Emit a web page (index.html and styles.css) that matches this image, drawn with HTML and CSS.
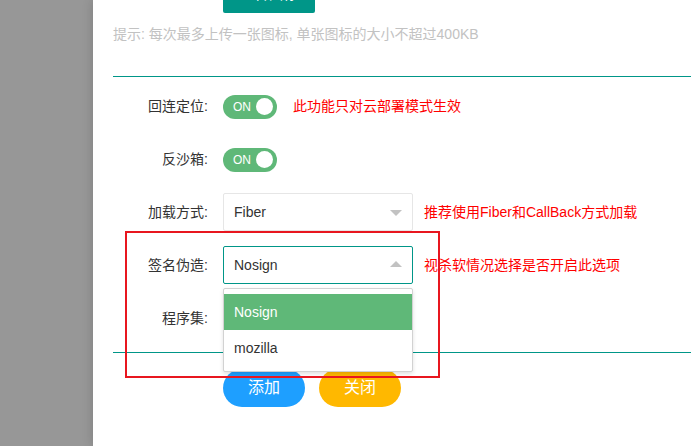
FILE: index.html
```html
<!DOCTYPE html>
<html lang="zh-CN">
<head>
<meta charset="utf-8">
<title>配置</title>
<link rel="stylesheet" href="styles.css">
</head>
<body>
<div class="page">
  <div class="shade"></div>
  <div class="panel">
    <div class="content">
      <div class="upload-row"><button class="btn-upload">上传图标</button></div>
      <div class="hint">提示: 每次最多上传一张图标, 单张图标的大小不超过400KB</div>
      <div class="divider first"></div>

      <div class="form-item">
        <label class="form-label">回连定位:</label>
        <div class="form-block">
          <div class="switch"><em>ON</em><i></i></div>
          <span class="aux aux-switch">此功能只对云部署模式生效</span>
        </div>
      </div>

      <div class="form-item">
        <label class="form-label">反沙箱:</label>
        <div class="form-block">
          <div class="switch"><em>ON</em><i></i></div>
        </div>
      </div>

      <div class="form-item">
        <label class="form-label">加载方式:</label>
        <div class="form-block">
          <div class="select"><span class="select-value">Fiber</span><span class="edge down"></span></div>
          <span class="aux">推荐使用Fiber和CallBack方式加载</span>
        </div>
      </div>

      <div class="form-item">
        <label class="form-label">签名伪造:</label>
        <div class="form-block">
          <div class="select open">
            <span class="select-value">Nosign</span><span class="edge up"></span>
            <dl class="dropdown">
              <dd class="selected">Nosign</dd>
              <dd>mozilla</dd>
            </dl>
          </div>
          <span class="aux">视杀软情况选择是否开启此选项</span>
        </div>
      </div>

      <div class="form-item">
        <label class="form-label">程序集:</label>
        <div class="form-block">
          <div class="select"><span class="select-value"></span><span class="edge down"></span></div>
        </div>
      </div>

      <div class="divider"></div>

      <div class="btn-row">
        <button class="btn btn-blue">添加</button>
        <button class="btn btn-yellow">关闭</button>
      </div>
    </div>
  </div>
  <div class="annotation"></div>
</div>
</body>
</html>
```
FILE: styles.css
```css
* { box-sizing: border-box; }

html, body {
  margin: 0;
  padding: 0;
}

body {
  width: 691px;
  height: 446px;
  overflow: hidden;
  background: #979797;
  font-family: "Liberation Sans", "Noto Sans CJK SC", sans-serif;
  font-size: 14px;
  color: #333;
}

.page {
  position: relative;
  display: flex;
  height: 446px;
}

.shade {
  flex: none;
  width: 93px;
  background: #979797;
}

.panel {
  flex: 1;
  background: #fff;
  box-shadow: -1px 0 10px rgba(0, 0, 0, 0.14);
  overflow: hidden;
}

.content {
  padding-left: 20px;
  margin-top: -25px;
}

.upload-row {
  padding-left: 110px;
}

.btn-upload {
  display: block;
  height: 38px;
  padding: 0 18px;
  border: 0;
  border-radius: 2px;
  background: #009688;
  color: #fff;
  font-family: inherit;
  font-size: 14px;
  line-height: 38px;
}

.hint {
  margin-top: 11px;
  margin-bottom: 32px;
  line-height: 20px;
  color: #c2c2c2;
  white-space: nowrap;
}

.divider {
  height: 1px;
  background: #009688;
}

.divider.first {
  margin-bottom: 10px;
}

.form-item {
  display: flex;
  height: 38px;
  margin-bottom: 15px;
}

.form-label {
  flex: none;
  width: 110px;
  padding: 9px 15px;
  line-height: 20px;
  text-align: right;
  color: #333;
}

.form-block {
  display: flex;
  align-items: center;
  height: 38px;
}

.switch {
  display: flex;
  align-items: center;
  justify-content: space-between;
  width: 54px;
  height: 24px;
  margin-top: 1px;
  padding: 0 4px 0 10px;
  border-radius: 12px;
  background: #5fb878;
}

.switch em {
  font-style: normal;
  font-size: 12px;
  color: #fff;
  line-height: 22px;
}

.switch i {
  display: block;
  width: 17px;
  height: 17px;
  border-radius: 50%;
  background: #fff;
}

.aux {
  margin-left: 11px;
  color: #f00;
  white-space: nowrap;
  line-height: 20px;
}

.aux-switch {
  margin-left: 16px;
}

.select {
  position: relative;
  display: flex;
  align-items: center;
  justify-content: space-between;
  width: 190px;
  height: 38px;
  padding: 0 10px;
  border: 1px solid #e6e6e6;
  border-radius: 2px;
  background: #fff;
}

.select.open {
  border-color: #009688;
}

.select-value {
  color: #333;
  line-height: 20px;
}

.edge {
  width: 0;
  height: 0;
  border-left: 6px solid transparent;
  border-right: 6px solid transparent;
}

.edge.down {
  border-top: 6px solid #c2c2c2;
  margin-top: 2px;
}

.edge.up {
  border-bottom: 6px solid #c2c2c2;
  margin-top: -2px;
}

.dropdown {
  position: absolute;
  top: 41px;
  left: -1px;
  z-index: 5;
  width: 190px;
  margin: 0;
  padding: 5px 0;
  border: 1px solid #d2d2d2;
  border-radius: 2px;
  background: #fff;
  box-shadow: 0 2px 4px rgba(0, 0, 0, 0.12);
}

.dropdown dd {
  margin: 0;
  padding: 0 10px;
  line-height: 36px;
  color: #333;
}

.dropdown dd.selected {
  background: #5fb878;
  color: #fff;
}

.btn-row {
  display: flex;
  gap: 14px;
  margin-top: 16px;
  padding-left: 110px;
}

.btn {
  height: 38px;
  padding: 0 25px;
  border: 0;
  border-radius: 19px;
  color: #fff;
  font-family: inherit;
  font-size: 16px;
  line-height: 38px;
}

.btn-blue { background: #1e9fff; }
.btn-yellow { background: #ffb800; }

.annotation {
  position: absolute;
  left: 125px;
  top: 231px;
  width: 315px;
  height: 147px;
  border: 2px solid #e8161f;
  z-index: 10;
  pointer-events: none;
}
```
